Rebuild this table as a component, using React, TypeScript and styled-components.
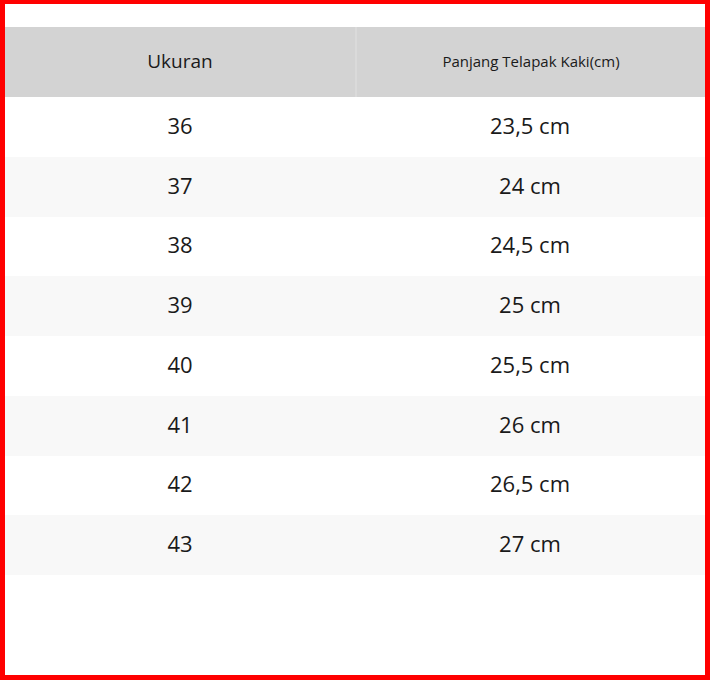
import React from "react";
import styled, { createGlobalStyle } from "styled-components";

const Global = createGlobalStyle`
  html, body { margin: 0; padding: 0; background: #fff; }
  body { font-family: "Open Sans", "Noto Sans", sans-serif; color: #1a1a1a; }
`;

const Frame = styled.div`
  box-sizing: border-box;
  width: 710px;
  height: 680px;
  border: 5px solid #ff0000;
  border-top-width: 4px;
  padding-top: 23px;
  background: #fff;
`;

const Table = styled.div`
  display: grid;
  grid-template-columns: 350px 350px;
`;

const HeadCell = styled.div<{ $small?: boolean; $divider?: boolean }>`
  height: 70px;
  padding-bottom: 2px;
  background: #d3d3d3;
  display: flex;
  align-items: center;
  justify-content: center;
  font-size: ${(p) => (p.$small ? "15px" : "19px")};
  color: #1a1a1a;
  border-left: ${(p) => (p.$divider ? "2px solid #dadada" : "none")};
  box-sizing: border-box;
`;

const Cell = styled.div<{ $alt: boolean }>`
  height: 59.75px;
  padding-bottom: 4px;
  box-sizing: border-box;
  background: ${(p) => (p.$alt ? "#f8f8f8" : "#ffffff")};
  display: flex;
  align-items: center;
  justify-content: center;
  font-size: 22px;
  color: #1a1a1a;
`;

const rows: [string, string][] = [
  ["36", "23,5 cm"],
  ["37", "24 cm"],
  ["38", "24,5 cm"],
  ["39", "25 cm"],
  ["40", "25,5 cm"],
  ["41", "26 cm"],
  ["42", "26,5 cm"],
  ["43", "27 cm"],
];

export default function App() {
  return (
    <>
      <Global />
      <Frame>
        <Table>
          <HeadCell>Ukuran</HeadCell>
          <HeadCell $small $divider>Panjang Telapak Kaki(cm)</HeadCell>
          {rows.map(([s, l], i) => (
            <React.Fragment key={s}>
              <Cell $alt={i % 2 === 1}>{s}</Cell>
              <Cell $alt={i % 2 === 1}>{l}</Cell>
            </React.Fragment>
          ))}
        </Table>
      </Frame>
    </>
  );
}
